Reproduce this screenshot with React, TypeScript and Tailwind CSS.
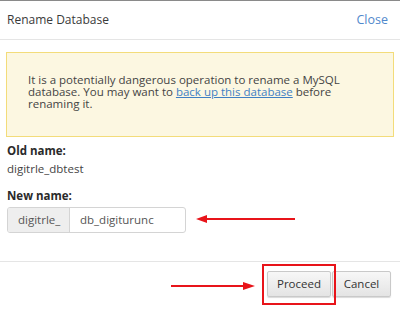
import React from 'react'

const font = { fontFamily: '"Open Sans", "Noto Sans", Arial, sans-serif' }

function ArrowLeft({ className }: { className: string }) {
  return (
    <svg className={className} width="100" height="10" viewBox="0 0 100 10">
      <line x1="8" y1="5" x2="99" y2="5" stroke="#e8141a" strokeWidth="2.2" />
      <polygon points="0,5 11,1 11,9" fill="#e8141a" />
    </svg>
  )
}

function ArrowRight({ className }: { className: string }) {
  return (
    <svg className={className} width="84" height="10" viewBox="0 0 84 10">
      <line x1="0" y1="5" x2="74" y2="5" stroke="#e8141a" strokeWidth="2.2" />
      <polygon points="84,5 72,1 72,9" fill="#e8141a" />
    </svg>
  )
}

export default function App() {
  return (
    <div className="relative w-[400px] h-[309px] bg-white text-[#333] overflow-hidden" style={font}>
      {/* top edge of the window */}
      <div className="h-px bg-[#8a8a8a]" />

      {/* Header */}
      <div className="h-[39px] flex items-center justify-between pl-[7px] pr-[12px] border-b border-[#e5e5e5]">
        <span className="text-[12px] text-[#3a3a3a]">Rename Database</span>
        <span className="text-[12.5px] text-[#5088cc]">Close</span>
      </div>

      {/* Body */}
      <div className="px-[6px] pt-[12px]">
        <div className="h-[85px] border border-[#f3dc7a] bg-[#fcf7e1] pl-[21px] pt-[21px] text-[11.5px] leading-[12.2px] text-[#444] whitespace-nowrap">
          It is a potentially dangerous operation to rename a MySQL
          <br />
          database. You may want to{' '}
          <span className="text-[#3f7fc4] underline">back up this database</span> before
          <br />
          renaming it.
        </div>

        <div className="pl-[1px] mt-[5px] text-[11.5px] leading-[18px]">
          <div className="font-bold text-[#2a2a2a]">Old name:</div>
          <div className="text-[#444]">digitrle_dbtest</div>
          <div className="font-bold text-[#2a2a2a] mt-[9px]">New name:</div>
          <div className="mt-[2px] flex h-[26px] w-[179px] border border-[#d4d4d4] rounded-[3px] overflow-hidden">
            <div className="w-[62px] bg-[#eeeeee] border-r border-[#d4d4d4] flex items-center pl-[10px] text-[#555]">
              digitrle_
            </div>
            <div className="flex-1 flex items-center pl-[10px] text-[#555]">db_digiturunc</div>
          </div>
        </div>
      </div>

      {/* Footer */}
      <div className="mt-[28px] border-t border-[#e5e5e5] pt-[9px] pr-[9px] flex justify-end gap-px">
        <button className="w-[64px] h-[26px] rounded-[2px] border border-[#c9c9c9] bg-gradient-to-b from-[#f7f7f7] to-[#e4e4e4] shadow-[0_1px_1px_rgba(0,0,0,0.15)] text-[11.5px] text-[#333]">
          Proceed
        </button>
        <button className="w-[59px] h-[26px] rounded-[2px] border border-[#c9c9c9] bg-gradient-to-b from-[#f7f7f7] to-[#e4e4e4] shadow-[0_1px_1px_rgba(0,0,0,0.15)] text-[11.5px] text-[#333]">
          Cancel
        </button>
      </div>

      {/* Annotations */}
      <ArrowLeft className="absolute left-[196px] top-[214px]" />
      <ArrowRight className="absolute left-[171px] top-[281px]" />
      <div className="absolute left-[262px] top-[264px] w-[74px] h-[41px] border-2 border-[#e8141a]" />
    </div>
  )
}
